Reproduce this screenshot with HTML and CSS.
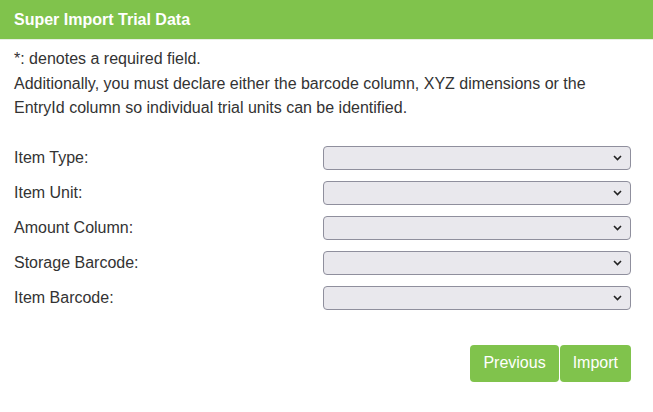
FILE: index.html
```html
<!DOCTYPE html>
<html>
<head>
<meta charset="utf-8">
<link rel="stylesheet" href="styles.css">
</head>
<body>
<div class="panel">
  <div class="panel-header">Super Import Trial Data</div>
  <div class="panel-body">
    <p class="note">*: denotes a required field.<br>Additionally, you must declare either the barcode column, XYZ dimensions or the EntryId column so individual trial units can be identified.</p>
    <div class="form">
      <label class="label">Item Type:</label>
      <div class="select"><svg class="chev" width="9" height="6" viewBox="0 0 9 6"><path d="M1 1 L4.5 4.5 L8 1" fill="none" stroke="#222" stroke-width="1.6"/></svg></div>
      <label class="label">Item Unit:</label>
      <div class="select"><svg class="chev" width="9" height="6" viewBox="0 0 9 6"><path d="M1 1 L4.5 4.5 L8 1" fill="none" stroke="#222" stroke-width="1.6"/></svg></div>
      <label class="label">Amount Column:</label>
      <div class="select"><svg class="chev" width="9" height="6" viewBox="0 0 9 6"><path d="M1 1 L4.5 4.5 L8 1" fill="none" stroke="#222" stroke-width="1.6"/></svg></div>
      <label class="label">Storage Barcode:</label>
      <div class="select"><svg class="chev" width="9" height="6" viewBox="0 0 9 6"><path d="M1 1 L4.5 4.5 L8 1" fill="none" stroke="#222" stroke-width="1.6"/></svg></div>
      <label class="label">Item Barcode:</label>
      <div class="select"><svg class="chev" width="9" height="6" viewBox="0 0 9 6"><path d="M1 1 L4.5 4.5 L8 1" fill="none" stroke="#222" stroke-width="1.6"/></svg></div>
    </div>
    <div class="actions">
      <button class="btn">Previous</button><button class="btn">Import</button>
    </div>
  </div>
</div>
</body>
</html>
```

FILE: styles.css
```css
html, body {
  margin: 0;
  padding: 0;
  background: #fff;
}
body {
  font-family: "Liberation Sans", Arial, sans-serif;
  color: #333;
}
.panel-header {
  background: #80c34c;
  color: #fff;
  font-weight: bold;
  font-size: 16px;
  height: 40px;
  line-height: 40px;
  padding: 0 14px;
  border-bottom: 1px solid #e8efe2;
  box-sizing: border-box;
}
.panel-body {
  padding: 7px 22px 0 14px;
}
.note {
  margin: 0;
  font-size: 16px;
  line-height: 24.5px;
  color: #333;
}
.form {
  display: grid;
  grid-template-columns: 1fr 1fr;
  row-gap: 11px;
  align-items: center;
  margin-top: 25px;
}
.label {
  font-size: 16px;
  color: #333;
}
.select {
  height: 24px;
  box-sizing: border-box;
  background: #e9e8ed;
  border: 1px solid #8f8f9d;
  border-radius: 4px;
  display: flex;
  align-items: center;
  justify-content: flex-end;
  padding-right: 8px;
}
.chev {
  display: block;
}
.actions {
  display: flex;
  justify-content: flex-end;
  margin-top: 35px;
}
.btn {
  font-family: "Liberation Sans", Arial, sans-serif;
  font-size: 16px;
  color: #fff;
  background: #80c34c;
  border: none;
  border-radius: 4px;
  height: 37px;
  padding: 0 13px;
  margin: 0;
}
.btn + .btn {
  margin-left: 1px;
}
```
